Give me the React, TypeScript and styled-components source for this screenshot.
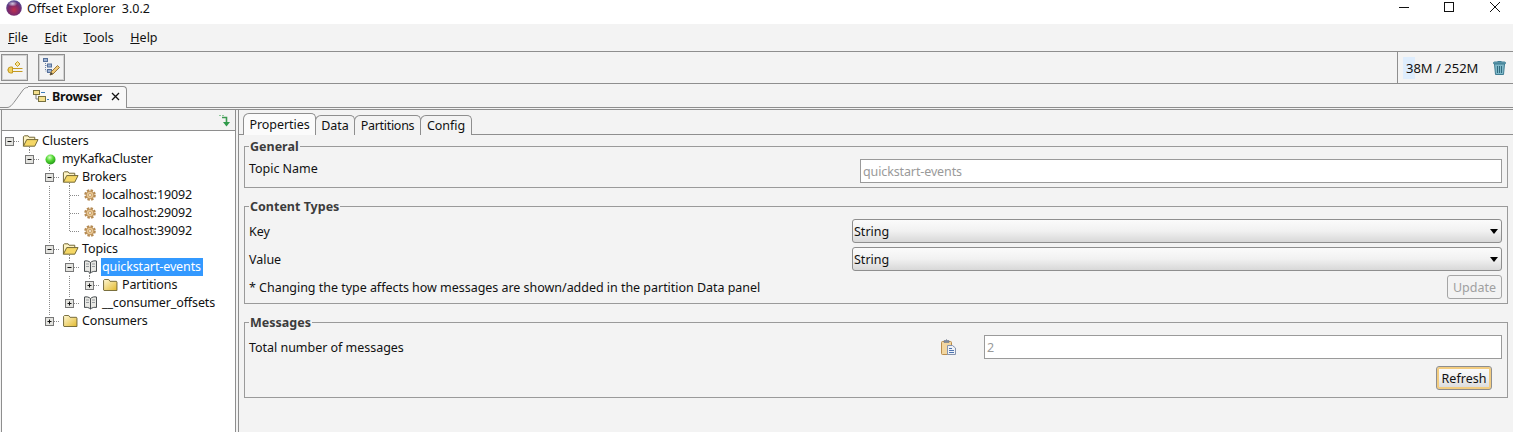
import { FC } from 'react';
import styled, { createGlobalStyle } from 'styled-components';

const GlobalStyle = createGlobalStyle`
  html, body {
    margin: 0;
    padding: 0;
    background: #f3f3f3;
  }
  * {
    box-sizing: border-box;
  }
`;

type GuideKind = 'blank' | 'pipe' | 'elbow' | 'tee' | 'minus' | 'plus' | 'rootMinus';

interface TreeNode {
  label: string;
  guides: GuideKind[];
  icon: 'openFolder' | 'folder' | 'ball' | 'gear' | 'book';
  stub?: boolean;
  selected?: boolean;
}

const nodes: TreeNode[] = [
  { label: 'Clusters', guides: ['rootMinus'], icon: 'openFolder', stub: true },
  { label: 'myKafkaCluster', guides: ['blank', 'minus'], icon: 'ball', stub: true },
  { label: 'Brokers', guides: ['blank', 'blank', 'minus'], icon: 'openFolder', stub: true },
  { label: 'localhost:19092', guides: ['blank', 'blank', 'pipe', 'tee'], icon: 'gear' },
  { label: 'localhost:29092', guides: ['blank', 'blank', 'pipe', 'tee'], icon: 'gear' },
  { label: 'localhost:39092', guides: ['blank', 'blank', 'pipe', 'elbow'], icon: 'gear' },
  { label: 'Topics', guides: ['blank', 'blank', 'minus'], icon: 'openFolder', stub: true },
  { label: 'quickstart-events', guides: ['blank', 'blank', 'pipe', 'minus'], icon: 'book', stub: true, selected: true },
  { label: 'Partitions', guides: ['blank', 'blank', 'pipe', 'pipe', 'plus'], icon: 'folder' },
  { label: '__consumer_offsets', guides: ['blank', 'blank', 'pipe', 'plus'], icon: 'book' },
  { label: 'Consumers', guides: ['blank', 'blank', 'plus'], icon: 'folder' },
];

const Guide: FC<{ kind: GuideKind }> = ({ kind }) => {
  const dots = { stroke: '#8a8a8a', strokeDasharray: '1 1', strokeWidth: 1, fill: 'none' };
  const hasBox = kind === 'minus' || kind === 'plus' || kind === 'rootMinus';
  return (
    <GuideSvg width="20" height="18" viewBox="0 0 20 18">
      {kind === 'pipe' && <path d="M9.5 0V18" {...dots} />}
      {kind === 'tee' && <path d="M9.5 0V18M10 9.5H20" {...dots} />}
      {kind === 'elbow' && <path d="M9.5 0V9M10 9.5H20" {...dots} />}
      {(kind === 'minus' || kind === 'plus') && <path d="M9.5 0V4M14 9.5H20" {...dots} />}
      {kind === 'rootMinus' && <path d="M14 9.5H20" {...dots} />}
      {hasBox && (
        <>
          <rect x="5.5" y="5.5" width="8" height="8" fill="#e4e4e0" stroke="#777" />
          <path d="M7.5 9.5H11.5" stroke="#111" />
          {kind === 'plus' && <path d="M9.5 7.5V11.5" stroke="#111" />}
        </>
      )}
    </GuideSvg>
  );
};

const NodeIcon: FC<{ icon: TreeNode['icon'] }> = ({ icon }) => {
  if (icon === 'openFolder') {
    return (
      <svg width="17" height="14" viewBox="0 0 18 14">
        <path d="M1.5 12.5V2.5L2.5 1.5H6.5L7.5 3H13.5V5.5" fill="#fdf3c4" stroke="#6b6130" />
        <path d="M1.5 12.5L5 5.5H17L13.5 12.5Z" fill="#f5d765" stroke="#6b6130" />
      </svg>
    );
  }
  if (icon === 'folder') {
    return (
      <svg width="15" height="12" viewBox="0 0 16 13">
        <defs>
          <linearGradient id="closedFolder" x1="0" y1="0" x2="1" y2="1">
            <stop offset="0" stopColor="#fff8d4" />
            <stop offset="1" stopColor="#e2b92e" />
          </linearGradient>
        </defs>
        <path d="M0.5 12V1.5L1.5 0.5H6L7.5 2.5H14.5L15 3.5V12.5H1Z" fill="url(#closedFolder)" stroke="#6b6130" />
      </svg>
    );
  }
  if (icon === 'ball') {
    return (
      <svg width="11" height="11" viewBox="0 0 11 11">
        <defs>
          <radialGradient id="greenBall" cx="0.42" cy="0.3" r="0.75">
            <stop offset="0" stopColor="#d4ffc4" />
            <stop offset="0.45" stopColor="#55d835" />
            <stop offset="1" stopColor="#1c8f14" />
          </radialGradient>
        </defs>
        <circle cx="5.5" cy="5.5" r="5" fill="url(#greenBall)" />
      </svg>
    );
  }
  if (icon === 'gear') {
    return (
      <svg width="12" height="12" viewBox="0 0 12 12">
        <circle cx="6" cy="6" r="4.8" fill="none" stroke="#b58a52" strokeWidth="2" strokeDasharray="2.4 1.37" />
        <circle cx="6" cy="6" r="3.9" fill="#e8c793" stroke="#ad7f45" strokeWidth="0.8" />
        <circle cx="6" cy="6" r="1.5" fill="#fbf3e2" stroke="#b98a4a" strokeWidth="0.7" />
      </svg>
    );
  }
  return (
    <svg width="15" height="14" viewBox="0 0 15 14">
      <path d="M7.5 2.5C6 1 3.5 0.5 1.5 1V11.5C3.5 11 6 11.5 7.5 13C9 11.5 11.5 11 13.5 11.5V1C11.5 0.5 9 1 7.5 2.5Z" fill="#e8e8e4" stroke="#484d50" />
      <path d="M7.5 2.5V13" stroke="#484d50" />
      <path d="M3 4H6M3 6.5H6M9 4H12M9 6.5H12" stroke="#989ca0" />
    </svg>
  );
};

const App: FC = () => (
  <Window>
    <GlobalStyle />
    <TitleBar>
      <TitleLeft>
        <svg width="16" height="16" viewBox="0 0 17 17">
          <defs>
            <radialGradient id="appLogo" cx="0.5" cy="0.62" r="0.72">
              <stop offset="0" stopColor="#c0304f" />
              <stop offset="0.5" stopColor="#7a2a6c" />
              <stop offset="1" stopColor="#3a5aa6" />
            </radialGradient>
            <radialGradient id="appLogoShine" cx="0.5" cy="0.5" r="0.5">
              <stop offset="0" stopColor="#e4e6f4" stopOpacity="0.85" />
              <stop offset="1" stopColor="#e4e6f4" stopOpacity="0" />
            </radialGradient>
          </defs>
          <circle cx="8.5" cy="8.5" r="8.3" fill="url(#appLogo)" />
          <ellipse cx="7" cy="4" rx="5" ry="3" fill="url(#appLogoShine)" />
        </svg>
        <TitleText>Offset Explorer&nbsp; 3.0.2</TitleText>
      </TitleLeft>
      <WindowButtons>
        <svg width="10" height="14" viewBox="0 0 10 14"><path d="M0 7.5H10" stroke="#111" /></svg>
        <svg width="11" height="14" viewBox="0 0 11 14"><rect x="0.5" y="2.5" width="9" height="9" fill="none" stroke="#111" /></svg>
        <svg width="10" height="14" viewBox="0 0 10 14"><path d="M0 2L10 12M10 2L0 12" stroke="#111" /></svg>
      </WindowButtons>
    </TitleBar>

    <MenuBar>
      <span><u>F</u>ile</span>
      <span><u>E</u>dit</span>
      <span><u>T</u>ools</span>
      <span><u>H</u>elp</span>
    </MenuBar>

    <ToolBar>
      <ToolGroup>
        <ToolButton>
          <svg width="16" height="14" viewBox="0 0 16 14" fill="none" stroke="#c49a22">
            <path d="M10.5 0.5L13 3L10.5 5.5L8 3Z" fill="#f7e39a" />
            <path d="M5 7.5H15.5M5 10.5H15.5" />
            <path d="M5.5 6H3.5A2.5 3 0 0 0 3.5 12H5.5Z" fill="#f2d25e" />
            <path d="M0.5 9H1.5" />
          </svg>
        </ToolButton>
        <ToolButton>
          <svg width="17" height="19" viewBox="0 0 17 19" fill="none">
            <path d="M2.5 3V13H5M2.5 7.5H5" stroke="#6f86aa" strokeDasharray="1 1" />
            <rect x="0.5" y="0.5" width="4" height="3" fill="#9db2d2" stroke="#56709a" />
            <rect x="4.5" y="6" width="4" height="3" fill="#9db2d2" stroke="#56709a" />
            <rect x="4.5" y="11.5" width="4" height="3" fill="#9db2d2" stroke="#56709a" />
            <path d="M7 17L8 14L14.5 7.5L16.5 9.5L10 16Z" fill="#f0c877" stroke="#9b7a3d" />
            <path d="M7 17L8 14L10 16Z" fill="#444" />
          </svg>
        </ToolButton>
      </ToolGroup>
      <MemoryBox>
        <MemoryText><MemoryBar />38M / 252M</MemoryText>
        <svg width="13" height="15" viewBox="0 0 13 15">
          <path d="M4.5 1.5H8.5" stroke="#3f7d93" />
          <rect x="0.5" y="2" width="12" height="2" rx="1" fill="#6aa6b8" stroke="#3f7d93" />
          <path d="M1.5 4L2.5 14.5H10.5L11.5 4Z" fill="#7fb8c8" stroke="#3f7d93" />
          <path d="M4.5 6V13M6.5 6V13M8.5 6V13" stroke="#2f6b80" />
        </svg>
      </MemoryBox>
    </ToolBar>

    <TabStrip>
      <TabSlant width="22" height="22" viewBox="0 0 22 22">
        <path d="M0 21.5H1C4 21.5 6 19 9 15L17 4C18.5 2 20 1.5 22 1.5V22H0Z" fill="#f8f8f8" />
        <path d="M0 21.5H1C4 21.5 6 19 9 15L17 4C18.5 2 20 1.5 22 1.5" fill="none" stroke="#8f8f8f" />
      </TabSlant>
      <BrowserTab>
        <svg width="16" height="13" viewBox="0 0 16 13">
          <rect x="0.5" y="0.5" width="6" height="4" fill="#f5e08d" stroke="#76703f" />
          <rect x="5.5" y="6.5" width="7" height="5" fill="#f5e08d" stroke="#76703f" />
          <path d="M3 5V9H5" stroke="#7a7a7a" fill="none" />
          <path d="M8 2.5H12M14 9.5H16" stroke="#3c7cb8" />
        </svg>
        <BrowserLabel>Browser</BrowserLabel>
        <svg width="9" height="9" viewBox="0 0 9 9"><path d="M1 1L8 8M8 1L1 8" stroke="#111" strokeWidth="1.3" /></svg>
      </BrowserTab>
    </TabStrip>

    <Body>
      <LeftPanel>
        <LeftHeader>
          <svg width="12" height="13" viewBox="0 0 12 13" fill="none">
            <path d="M0 1.5H2M3 1.5H5" stroke="#8fc79a" />
            <path d="M3 3.5H7.5V9" stroke="#3d9a52" strokeWidth="1.6" />
            <path d="M4 8H11L7.5 12.5Z" fill="#2f9a4a" />
          </svg>
        </LeftHeader>
        <Tree>
          {nodes.map((node) => (
            <TreeRow key={node.label}>
              {node.guides.map((kind, i) => (
                <Guide key={i} kind={kind} />
              ))}
              <IconCell $stub={node.stub}>
                <NodeIcon icon={node.icon} />
              </IconCell>
              <NodeLabel $selected={node.selected}>{node.label}</NodeLabel>
            </TreeRow>
          ))}
        </Tree>
      </LeftPanel>

      <RightPanel>
        <Tabs>
          <Tab $active $width={73}>Properties</Tab>
          <Tab $width={40}>Data</Tab>
          <Tab $width={67} $tight>Partitions</Tab>
          <Tab $width={52}>Config</Tab>
        </Tabs>
        <Pane>
          <Group $bottom={4}>
            <Legend>General</Legend>
            <FieldRow $field={642}>
              <FieldLabel $raised>Topic Name</FieldLabel>
              <TextField>quickstart-events</TextField>
            </FieldRow>
          </Group>

          <Group $bottom={4}>
            <Legend>Content Types</Legend>
            <FieldStack>
              <FieldRow $field={650}>
                <FieldLabel>Key</FieldLabel>
                <Combo>
                  String
                  <ComboArrow />
                </Combo>
              </FieldRow>
              <FieldRow $field={650}>
                <FieldLabel>Value</FieldLabel>
                <Combo>
                  String
                  <ComboArrow />
                </Combo>
              </FieldRow>
              <NoteRow>
                <FieldLabel>* Changing the type affects how messages are shown/added in the partition Data panel</FieldLabel>
                <UpdateButton>Update</UpdateButton>
              </NoteRow>
            </FieldStack>
          </Group>

          <Group $bottom={7}>
            <Legend>Messages</Legend>
            <MessagesRow>
              <FieldLabel>Total number of messages</FieldLabel>
              <svg width="15" height="16" viewBox="0 0 15 16">
                <rect x="0.5" y="2.5" width="10" height="13" rx="1" fill="#f2d6a0" stroke="#b98d4c" />
                <path d="M3 3V1.5H4.5L5.5 0.5L6.5 1.5H8V3.5H3Z" fill="#7f8a9c" stroke="#667084" strokeWidth="0.5" />
                <path d="M6.5 6.5H11.5L14.5 9V15.5H6.5Z" fill="#eef2f8" stroke="#8593ad" />
                <path d="M8 9.5H11M8 11.5H13M8 13.5H13" stroke="#4f74b0" />
              </svg>
              <TextField>2</TextField>
            </MessagesRow>
            <RefreshRow>
              <RefreshButton>Refresh</RefreshButton>
            </RefreshRow>
          </Group>
        </Pane>
      </RightPanel>
    </Body>
  </Window>
);

export default App;

const Window = styled.div`
  width: 1513px;
  height: 432px;
  overflow: hidden;
  display: flex;
  flex-direction: column;
  background: #f3f3f3;
  color: #111;
  font-family: 'Noto Sans', 'Liberation Sans', sans-serif;
  font-size: 12.5px;
`;

const TitleBar = styled.div`
  height: 24px;
  flex: none;
  background: #fff;
  display: flex;
  align-items: flex-start;
  justify-content: space-between;
  padding: 0 13px 0 6px;
`;

const TitleLeft = styled.div`
  display: flex;
  align-items: center;
  gap: 5px;
  height: 16px;
`;

const TitleText = styled.span`
  font-size: 12.5px;
`;

const WindowButtons = styled.div`
  display: flex;
  gap: 35px;
  align-items: center;
`;

const MenuBar = styled.div`
  height: 28px;
  flex: none;
  display: flex;
  align-items: center;
  gap: 16.5px;
  padding-left: 8px;
  border-bottom: 1px solid #8e8e8e;
  font-size: 12.5px;
`;

const ToolBar = styled.div`
  height: 32px;
  flex: none;
  display: flex;
  justify-content: space-between;
  border-bottom: 1px solid #8e8e8e;
`;

const ToolGroup = styled.div`
  display: flex;
  align-items: center;
  gap: 10px;
  padding-left: 1px;
`;

const ToolButton = styled.div`
  width: 27px;
  height: 27px;
  display: flex;
  align-items: center;
  justify-content: center;
  border: 1px solid #8f8f8f;
  box-shadow: inset 0 0 0 1px #d2d2d2;
`;

const MemoryBox = styled.div`
  width: 116px;
  display: flex;
  align-items: center;
  gap: 15px;
  padding-left: 8px;
  border-left: 1px solid #8e8e8e;
  font-size: 13px;
`;

const MemoryText = styled.div`
  position: relative;
  isolation: isolate;
  white-space: nowrap;
`;

const MemoryBar = styled.span`
  position: absolute;
  z-index: -1;
  left: -3px;
  top: -2px;
  width: 12px;
  height: 22px;
  background: #deedfd;
`;

const TabStrip = styled.div`
  height: 24px;
  flex: none;
  display: flex;
  align-items: flex-end;
  padding-left: 6px;
  border-bottom: 1px solid #8e8e8e;
`;

const TabSlant = styled.svg`
  flex: none;
  margin-bottom: -1px;
`;

const BrowserTab = styled.div`
  height: 22px;
  margin-bottom: -1px;
  width: 99px;
  display: flex;
  align-items: center;
  gap: 3px;
  padding: 0 0 2px 5px;
  background: #f8f8f8;
  border: 1px solid #8f8f8f;
  border-left: 0;
  border-bottom: 0;
  border-top-right-radius: 4px;
`;

const BrowserLabel = styled.span`
  font-weight: 700;
  font-size: 12.5px;
  letter-spacing: -0.2px;
  margin-right: 6px;
`;

const Body = styled.div`
  flex: 1;
  min-height: 0;
  display: flex;
  border-top: 1px solid #8e8e8e;
  margin-top: 1px;
`;

const LeftPanel = styled.div`
  width: 235px;
  margin-left: 1px;
  flex: none;
  display: flex;
  flex-direction: column;
  border-left: 1px solid #8e8e8e;
  border-right: 1px solid #8e8e8e;
`;

const LeftHeader = styled.div`
  height: 20px;
  flex: none;
  display: flex;
  justify-content: flex-end;
  align-items: center;
  padding-right: 4px;
`;

const Tree = styled.div`
  flex: 1;
  background: #fff;
  border-top: 1px solid #8e8e8e;
  padding-top: 1px;
  overflow: hidden;
`;

const TreeRow = styled.div`
  height: 18px;
  display: flex;
  align-items: center;
  margin-left: -2px;
`;

const GuideSvg = styled.svg`
  flex: none;
`;

const IconCell = styled.div<{ $stub?: boolean }>`
  position: relative;
  width: 21px;
  height: 18px;
  flex: none;
  display: flex;
  align-items: center;
  justify-content: center;
  padding-right: 1px;

  ${({ $stub }) =>
    $stub &&
    `
    &::after {
      content: '';
      position: absolute;
      left: 9px;
      top: 15px;
      width: 1px;
      height: 3px;
      background: repeating-linear-gradient(#8a8a8a 0 1px, transparent 1px 2px);
    }
  `}
`;

const NodeLabel = styled.span<{ $selected?: boolean }>`
  height: 18px;
  line-height: 18px;
  padding: 0 2px 0 1px;
  white-space: nowrap;
  letter-spacing: -0.12px;
  background: ${({ $selected }) => ($selected ? '#3399ff' : 'transparent')};
  color: ${({ $selected }) => ($selected ? '#fff' : '#111')};
`;

const RightPanel = styled.div`
  flex: 1;
  min-width: 0;
  margin-left: 2px;
  border-left: 1px solid #8e8e8e;
  display: flex;
  flex-direction: column;
  padding-top: 3px;
`;

const Tabs = styled.div`
  display: flex;
  align-items: flex-end;
  height: 22px;
  padding-left: 4px;
  border-bottom: 1px solid #8e8e8e;
`;

const Tab = styled.div<{ $active?: boolean; $width: number; $tight?: boolean }>`
  width: ${({ $width }) => $width}px;
  height: ${({ $active }) => ($active ? '22px' : '20px')};
  display: flex;
  align-items: center;
  justify-content: center;
  margin-bottom: -1px;
  margin-right: -1px;
  padding-bottom: 1px;
  background: ${({ $active }) => ($active ? '#fbfbfb' : '#f3f3f3')};
  border: 1px solid #8e8e8e;
  border-bottom: 0;
  border-radius: 6px 5px 0 0;
  font-size: 12.5px;
  letter-spacing: ${({ $tight }) => ($tight ? '-0.3px' : '-0.05px')};
`;

const Pane = styled.div`
  padding: 3px 5px 0 5px;
  display: flex;
  flex-direction: column;
  gap: 10px;
`;

const Group = styled.fieldset<{ $bottom: number }>`
  margin: 0;
  min-width: 0;
  padding: 5px 5px ${({ $bottom }) => $bottom}px 4px;
  border: 1px solid #9a9a9a;
`;

const Legend = styled.legend`
  margin-left: 0;
  padding: 0 1px;
  height: 16px;
  line-height: 18px;
  font-weight: 700;
  color: #3c3c3c;
`;

const FieldStack = styled.div`
  display: flex;
  flex-direction: column;
  gap: 4px;
`;

const FieldRow = styled.div<{ $field: number }>`
  display: grid;
  grid-template-columns: 1fr ${({ $field }) => $field}px;
  align-items: center;
`;

const FieldLabel = styled.span<{ $raised?: boolean }>`
  margin-top: ${({ $raised }) => ($raised ? '-6px' : '0')};
  letter-spacing: -0.03px;
`;

const TextField = styled.div`
  height: 24px;
  display: flex;
  align-items: center;
  padding-left: 2px;
  background: #fff;
  border: 1px solid #9a9a9a;
  color: #9a9a9a;
  letter-spacing: -0.12px;
`;

const Combo = styled.div`
  position: relative;
  height: 24px;
  display: flex;
  align-items: center;
  padding-left: 1px;
  border: 1px solid #8e8e8e;
  border-radius: 3px;
  background: linear-gradient(#fbfbfb, #f1f1f1 50%, #d8d8d8);
`;

const ComboArrow = styled.span`
  position: absolute;
  right: 3px;
  top: 9px;
  border-left: 4px solid transparent;
  border-right: 4px solid transparent;
  border-top: 5px solid #000;
`;

const NoteRow = styled.div`
  display: flex;
  justify-content: space-between;
  align-items: center;
`;

const UpdateButton = styled.div`
  width: 55px;
  height: 24px;
  display: flex;
  align-items: center;
  justify-content: center;
  border: 1px solid #a5a5a5;
  border-radius: 3px;
  color: #a0a0a0;
`;

const MessagesRow = styled.div`
  display: grid;
  grid-template-columns: 692px 43px 518px;
  align-items: center;
`;

const RefreshRow = styled.div`
  display: flex;
  justify-content: flex-end;
  padding: 7px 10px 0 0;
`;

const RefreshButton = styled.div`
  width: 56px;
  height: 24px;
  display: flex;
  align-items: center;
  justify-content: center;
  border: 1px solid #8e8e8e;
  border-radius: 3px;
  box-shadow: inset 0 0 0 2px #f2cc80;
  background: linear-gradient(#fbfbfb, #f1f1f1 50%, #d8d8d8);
`;
